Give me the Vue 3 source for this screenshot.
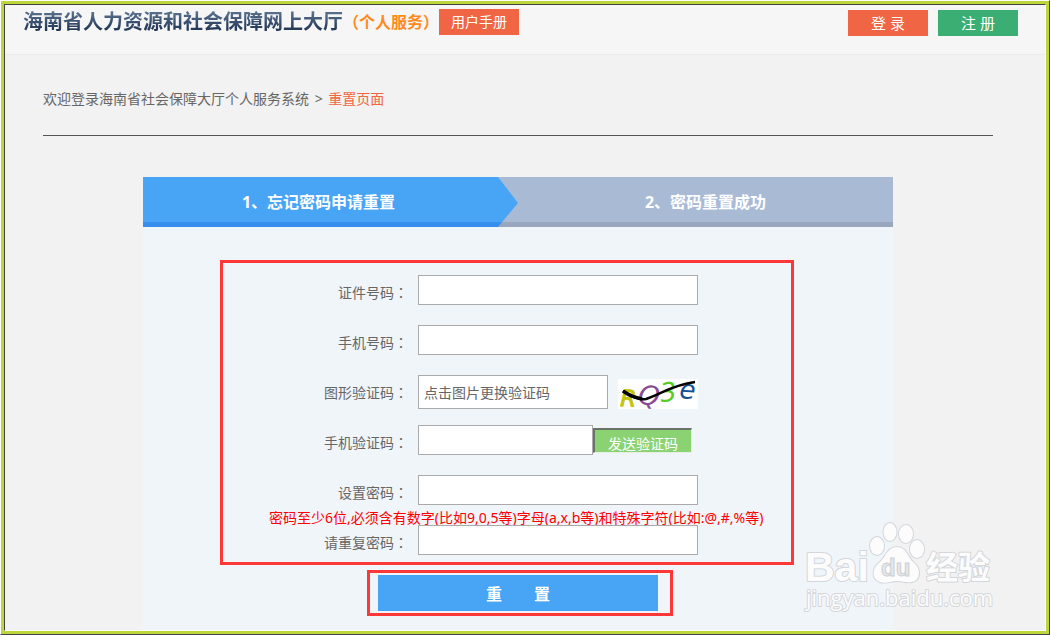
<template>
  <div class="frame">
    <div class="frame-line">
      <div class="page">
        <header class="header">
          <h1 class="brand">海南省人力资源和社会保障网上大厅</h1>
          <span class="sub">（个人服务）</span>
          <a class="btn manual" href="#">用户手册</a>
          <nav class="account">
            <a class="btn login" href="#">登 录</a>
            <a class="btn register" href="#">注 册</a>
          </nav>
        </header>

        <main class="main">
          <div class="crumb">
            欢迎登录海南省社会保障大厅个人服务系统 <span class="arrow">&gt;</span> <a href="#">重置页面</a>
          </div>

          <form class="panel" @submit.prevent>
            <ol class="steps">
              <li
                v-for="(item, index) in steps"
                :key="item"
                :class="{ active: index === step }"
              >{{ index + 1 }}、{{ item }}</li>
            </ol>

            <div class="fields">
              <div class="row">
                <label for="idcard">证件号码<span class="colon">：</span></label>
                <input id="idcard" v-model="form.idcard" type="text" />
              </div>
              <div class="row">
                <label for="mobile">手机号码<span class="colon">：</span></label>
                <input id="mobile" v-model="form.mobile" type="text" />
              </div>
              <div class="row">
                <label for="imgcode">图形验证码<span class="colon">：</span></label>
                <input
                  id="imgcode"
                  v-model="form.imgcode"
                  class="imgcode"
                  type="text"
                  placeholder="点击图片更换验证码"
                />
                <svg class="captcha" viewBox="0 0 80 30">
                  <rect width="80" height="30" fill="#fff" />
                  <text x="2" y="27" font-size="23" fill="#c3c40c" stroke="#c3c40c" transform="rotate(3 2 27)">R</text>
                  <text x="19" y="24" font-size="27" fill="#8a4a94" transform="rotate(10 19 24)">Q</text>
                  <text x="43" y="23" font-size="26" fill="#55cc22" transform="rotate(-6 43 23)">3</text>
                  <text x="61" y="19" font-size="26" fill="#164f94" transform="rotate(4 61 19)">e</text>
                  <path d="M5 12C14 18 20 21 28 20C42 16 53 6 77 3" fill="none" stroke="#000" stroke-width="2.4" />
                  <path d="M5 12C12 17 16 18 24 20" fill="none" stroke="#000" stroke-width="3.4" />
                </svg>
              </div>
              <div class="row">
                <label for="smscode">手机验证码<span class="colon">：</span></label>
                <input id="smscode" v-model="form.smscode" class="smscode" type="text" />
                <button class="send" type="button">发送验证码</button>
              </div>
              <div class="row short">
                <label for="pwd">设置密码<span class="colon">：</span></label>
                <input id="pwd" v-model="form.pwd" type="password" />
              </div>
              <p class="tip">密码至少6位,必须含有数字(比如9,0,5等)字母(a,x,b等)和特殊字符(比如:@,#,%等)</p>
              <div class="row short">
                <label for="pwd2">请重复密码<span class="colon">：</span></label>
                <input id="pwd2" v-model="form.pwd2" type="password" />
              </div>
            </div>

            <div class="submit-box">
              <button class="submit" type="submit">重　　置</button>
            </div>
          </form>
        </main>

        <svg class="watermark" viewBox="0 0 200 100" aria-hidden="true">
          <g fill="#fcfcfd" stroke="#d3d6da" stroke-width="2" paint-order="stroke" stroke-linejoin="round">
            <text class="wm-latin" x="5" y="66" font-size="41">Bai</text>
            <ellipse cx="77" cy="31" rx="7" ry="9" />
            <ellipse cx="90" cy="17" rx="6.5" ry="9" />
            <ellipse cx="106" cy="19" rx="7" ry="9" />
            <ellipse cx="117" cy="34" rx="7" ry="9" />
            <path d="M97 32C88 32 86 41 80 47C73 52 70 63 80 67C87 69 91 66 97 66C103 66 109 69 115 66C122 61 119 51 113 47C107 41 106 32 97 32Z" />
            <text class="wm-cjk" x="126" y="64" font-size="32">经验</text>
            <text class="wm-url" x="6" y="91" font-size="22">jingyan.baidu.com</text>
          </g>
          <text class="wm-latin" x="81" y="61" font-size="24" fill="#e6e8ea" stroke="#cdd0d4">du</text>
        </svg>
      </div>
    </div>
  </div>
</template>

<script setup>
import { ref, reactive } from 'vue'

const steps = ['忘记密码申请重置', '密码重置成功']
const step = ref(0)

const form = reactive({
  idcard: '',
  mobile: '',
  imgcode: '',
  smscode: '',
  pwd: '',
  pwd2: ''
})
</script>

<style>
body {
  margin: 0;
  background: #f2f2f2;
}
</style>

<style scoped>
* {
  box-sizing: border-box;
}

.frame {
  display: flex;
  min-height: 100vh;
  border: 1px solid #fff;
  border-right-color: #444;
  border-bottom-color: #444;
  font-family: "Noto Sans", "Noto Sans CJK SC", sans-serif;
  font-size: 14px;
  color: #666;
}

.frame-line {
  display: flex;
  flex: 1;
  border: 3px solid #bdd63c;
}

.page {
  position: relative;
  display: flex;
  flex-direction: column;
  flex: 1;
  border: 1px solid #444;
  border-right-color: #fff;
  border-bottom-color: #fff;
  background: #f2f2f2;
}

.header {
  display: flex;
  align-items: flex-start;
  height: 50px;
  padding: 4px 27px 0 18px;
  background: #f6f6f6;
  border-bottom: 1px solid #ebebeb;
}

.brand {
  margin: 0;
  font-size: 20px;
  line-height: 26px;
  font-weight: bold;
  color: transparent;
  background: linear-gradient(#5a7190 10%, #1b304e 90%);
  background-clip: text;
}

.sub {
  font-size: 16px;
  line-height: 26px;
  font-weight: bold;
  color: #ff8a1c;
}

.btn {
  width: 80px;
  line-height: 26px;
  text-align: center;
  color: #fff;
  text-decoration: none;
}

.manual,
.login {
  background: #f06543;
}

.register {
  background: #3aae73;
}

.account {
  display: flex;
  gap: 10px;
  margin-left: auto;
  padding-top: 1px;
  font-size: 15px;
}

.main {
  display: flex;
  flex-direction: column;
  flex: 1;
  width: 100%;
  max-width: 964px;
  margin: 0 auto;
  padding-right: 14px;
}

.crumb {
  padding: 34px 0 26px;
  line-height: 20px;
  border-bottom: 1px solid #555;
}

.crumb .arrow {
  margin: 0 2px;
}

.crumb a {
  color: #f06543;
  text-decoration: none;
}

.panel {
  flex: 1;
  width: 750px;
  max-width: 100%;
  margin: 41px auto 0;
  background: #f0f5fa;
}

.steps {
  display: flex;
  margin: 0;
  padding: 0;
  list-style: none;
  background: linear-gradient(#a9bad5 45px, #98a7bd 45px);
}

.steps li {
  width: 50%;
  height: 50px;
  line-height: 50px;
  text-align: center;
  font-size: 16px;
  font-weight: bold;
  color: #fff;
}

.steps .active {
  padding-right: 24px;
  background: linear-gradient(#48a4f4 45px, #368eee 45px);
  clip-path: polygon(0 0, calc(100% - 20px) 0, 100% 52%, calc(100% - 20px) 100%, 0 100%);
}

.fields {
  margin: 33px 99px 0 77px;
  padding: 12px 0 7px 22px;
  border: 3px solid #fc3838;
}

.row {
  display: flex;
  align-items: flex-start;
  height: 50px;
}

.row.short {
  height: 30px;
}

.row label {
  width: 163px;
  margin-right: 10px;
  line-height: 34px;
  text-align: right;
}

.colon {
  font-family: "Noto Sans CJK TC", sans-serif;
}

.row input {
  width: 280px;
  height: 30px;
  padding: 0 5px;
  border: 1px solid #aaa;
  border-radius: 0;
  background: #fff;
  font: inherit;
  color: #666;
  outline: none;
}

.row .imgcode {
  width: 190px;
  height: 34px;
}

.row .imgcode::placeholder {
  color: #666;
  opacity: 1;
}

.row .smscode {
  width: 175px;
}

.captcha {
  width: 80px;
  height: 30px;
  margin: 4px 0 0 10px;
  overflow: visible;
  font-family: "DejaVu Sans", sans-serif;
  font-style: italic;
}

.send {
  width: 99px;
  height: 25px;
  margin-top: 3px;
  padding: 5px 0 0;
  border: 2px solid #6b7268;
  border-right: 1px solid #e5efe2;
  border-bottom: 1px solid #e5efe2;
  background: #8bd372;
  font: inherit;
  line-height: 18px;
  color: #fff;
}

.tip {
  height: 20px;
  margin: 0;
  padding-left: 24px;
  line-height: 26px;
  white-space: nowrap;
  color: #f00;
}

.submit-box {
  width: 306px;
  margin: 5px auto 14px 224px;
  padding: 2px 12px 2px 8px;
  border: 3px solid #fc3838;
}

.submit {
  display: block;
  width: 280px;
  height: 36px;
  padding: 0;
  border: 0;
  background: #48a4f4;
  font: inherit;
  font-size: 16px;
  font-weight: bold;
  color: #fff;
}

.watermark {
  position: absolute;
  right: 45px;
  bottom: 15px;
  width: 200px;
  height: 100px;
  pointer-events: none;
}

.wm-latin {
  font-family: "Liberation Sans", sans-serif;
  font-weight: bold;
}

.wm-cjk {
  font-family: "Noto Sans CJK SC", sans-serif;
  font-weight: bold;
}

.wm-url {
  font-family: "Open Sans", sans-serif;
}
</style>
